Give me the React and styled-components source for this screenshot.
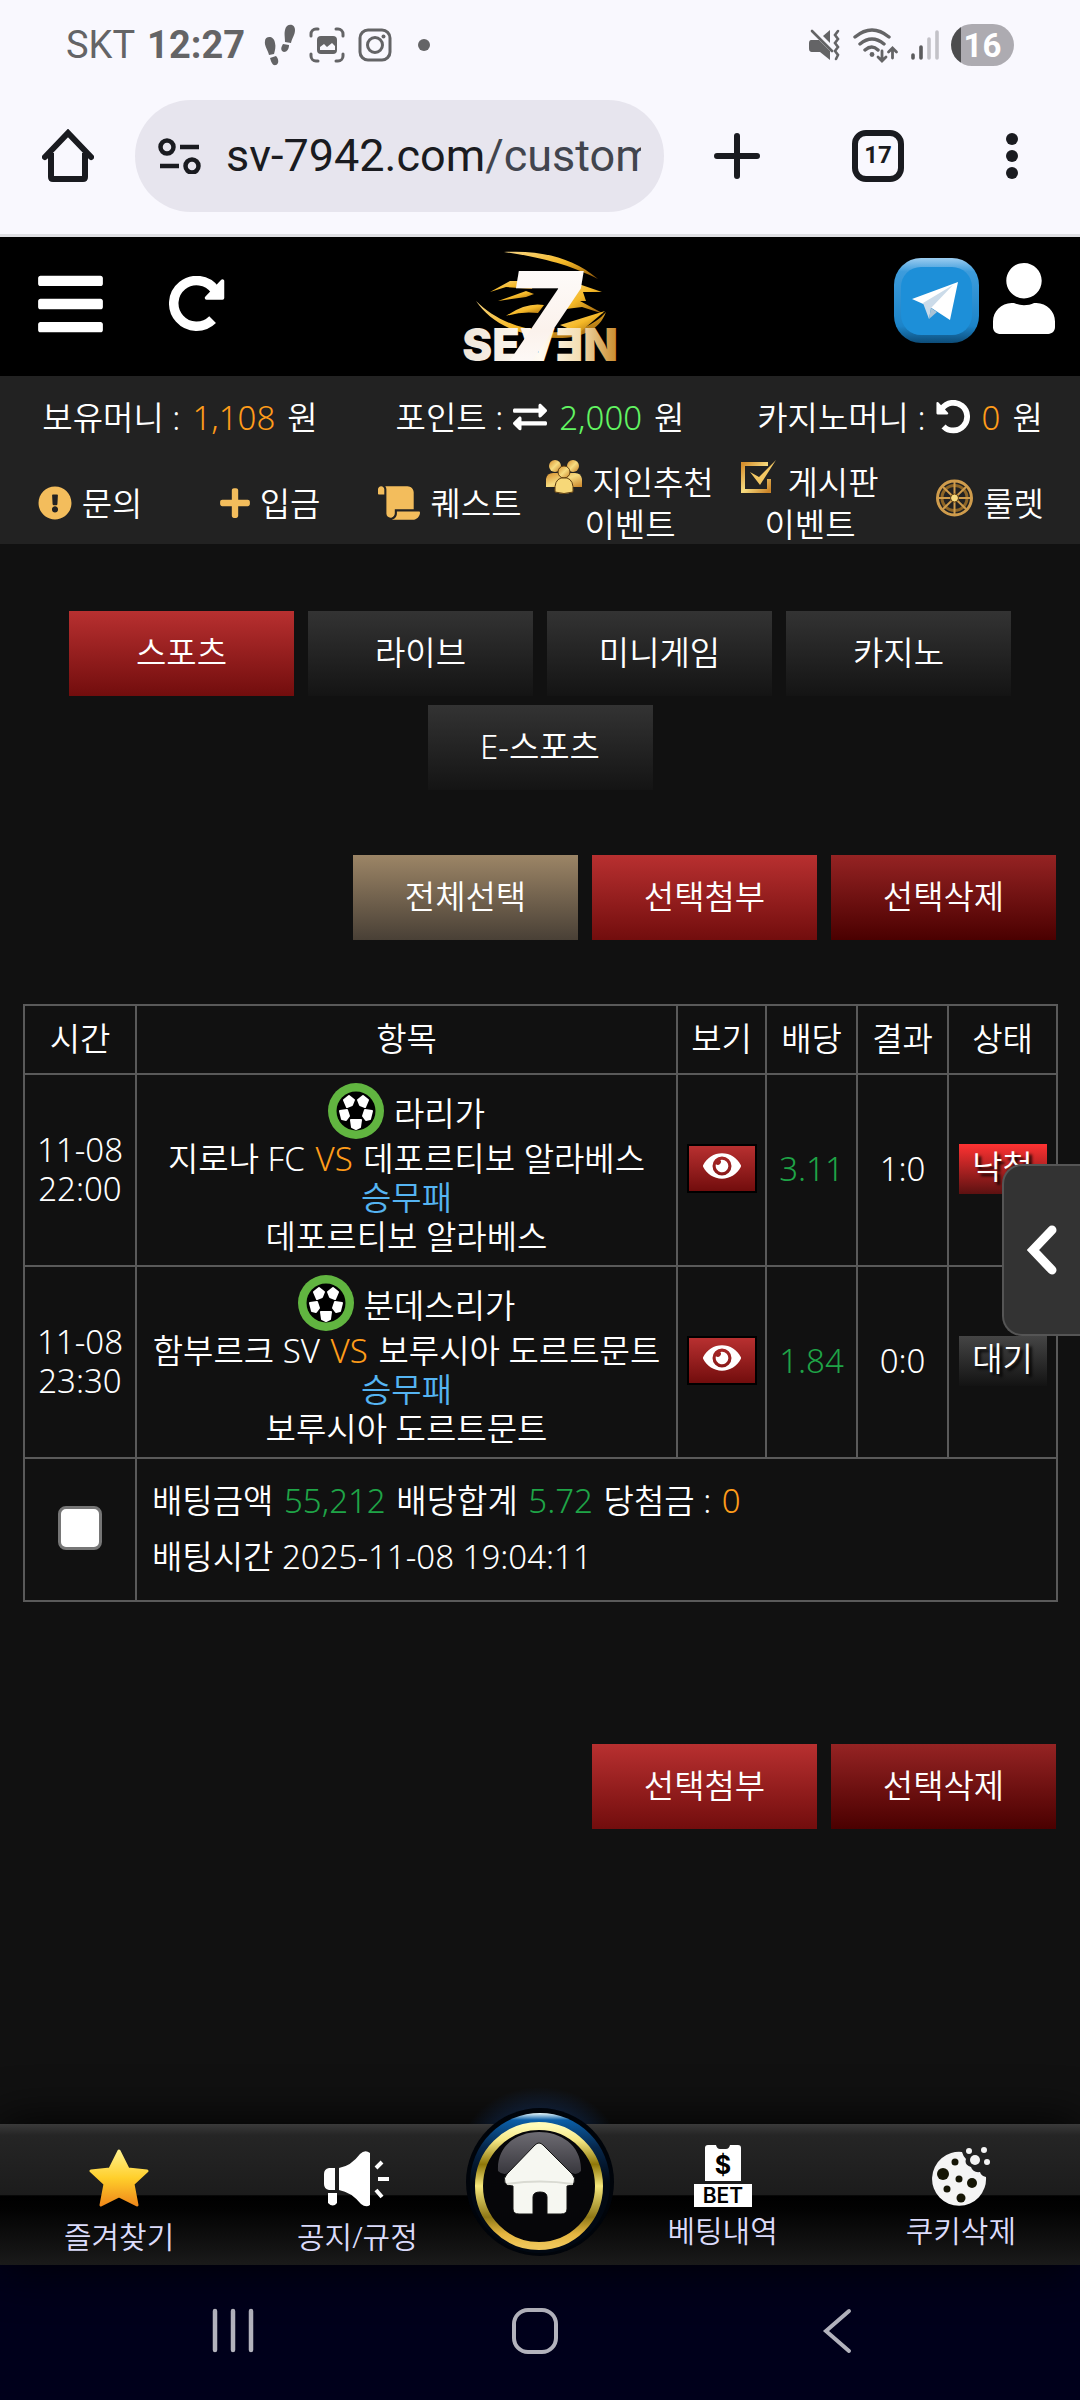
import React, { useState } from 'react'
import styled, { createGlobalStyle } from 'styled-components'
import {
  FaBars,
  FaUser,
  FaExclamationCircle,
  FaPlus,
  FaScroll,
  FaExchangeAlt,
  FaEye,
} from 'react-icons/fa'

const GlobalStyle = createGlobalStyle`
  * {
    box-sizing: border-box;
  }
  body {
    margin: 0;
    background: #111;
    color: #fff;
    font-family: 'Noto Sans', 'Noto Sans CJK KR', sans-serif;
    font-size: 33px;
    font-weight: 350;
    line-height: 39px;
  }
  button, input {
    margin: 0;
    padding: 0;
    border: 0;
    background: none;
    color: inherit;
    font: inherit;
  }
  a {
    color: inherit;
    text-decoration: none;
  }
  svg {
    display: block;
    flex: none;
  }
`
const Page = styled.div`
  display: flex;
  flex-direction: column;
  min-height: 100vh;
  overflow-x: hidden;
`

/* phone status bar + browser bar */

const StatusBar = styled.div`
  display: flex;
  align-items: center;
  justify-content: space-between;
  height: 90px;
  padding: 0 66px;
  background: #f9f8fe;
  color: #646466;
  font-family: Roboto, sans-serif;
  font-size: 38px;
  font-weight: 400;
`
const StatusGroup = styled.div`
  display: flex;
  align-items: center;
  gap: ${({ gap }) => gap}px;
`
const Battery = styled.span`
  width: 63px;
  height: 42px;
  border-radius: 21px;
  background: linear-gradient(90deg, #4c4c4e 10px, #adabb1 10px);
  color: #fff;
  font-size: 33px;
  font-weight: 700;
  line-height: 43px;
  text-align: center;
`
const BrowserBar = styled.div`
  display: flex;
  align-items: center;
  height: 147px;
  padding: 0 62px 13px 42px;
  background: #f9f8fe;
  border-bottom: 3px solid #dfdfe3;
  color: #1a1b20;
`
const AddressBar = styled.div`
  display: flex;
  flex: 1;
  align-items: center;
  gap: 24px;
  height: 112px;
  margin-left: 41px;
  padding: 0 23px;
  border-radius: 56px;
  background: #e7e5ee;
`
const Url = styled.span`
  flex: 1;
  width: 0;
  overflow: hidden;
  white-space: nowrap;
  font-family: Roboto, sans-serif;
  font-size: 45px;
  font-weight: 400;
  line-height: 60px;

  span {
    color: #42454e;
  }
`
const BrowserActions = styled.div`
  display: flex;
  align-items: center;
  justify-content: space-between;
  width: 304px;
  margin-left: 50px;
`
const TabCount = styled.button`
  width: 52px;
  height: 52px;
  border: 6px solid #1a1b20;
  border-radius: 14px;
  font-family: Roboto, sans-serif;
  font-size: 24px;
  font-weight: 700;
`
const MenuButton = styled.button`
  padding-left: 10px;
`

/* site header */

const Header = styled.header`
  display: grid;
  grid-template-columns: 1fr auto 1fr;
  align-items: center;
  height: 139px;
  padding: 0 25px;
  background: #000;
`
const HeaderLeft = styled.div`
  display: flex;
  align-items: center;
  gap: 66px;
  padding: 0 0 6px 13px;
`
const HeaderRight = styled.div`
  display: flex;
  align-items: flex-start;
  justify-content: flex-end;
  gap: 14px;
  padding-bottom: 12px;
`
const UserButton = styled.button`
  padding-top: 5px;
`
const BarsIcon = styled(FaBars)`
  width: 65px;
  height: 74px;
`
const UserIcon = styled(FaUser)`
  width: 62px;
  height: 71px;
`
const PlusIcon = styled(FaPlus)`
  width: 30px;
  height: 34px;
`
const ScrollIcon = styled(FaScroll)`
  width: 42px;
  height: 34px;
`
const EyeIcon = styled(FaEye)`
  width: 38px;
  height: 34px;
`
const Info = styled.section`
  background: #222;
`
const Balances = styled.div`
  display: grid;
  grid-template-columns: repeat(3, 1fr);
  height: 86px;
`
const Balance = styled.div`
  display: flex;
  align-items: center;
  justify-content: center;
  gap: 10px;
  padding-bottom: 4px;
  white-space: nowrap;
`
const Quick = styled.nav`
  display: grid;
  grid-template-columns: repeat(6, 1fr);
  height: 82px;
`
const QuickLink = styled.a`
  display: flex;
  flex-direction: column;
  align-items: center;
  justify-content: center;
  padding-bottom: 2px;
  line-height: 42px;
`
const QuickLine = styled.span`
  display: flex;
  align-items: center;
  gap: 10px;
  height: 42px;
  white-space: nowrap;

  svg {
    color: #f3bd5c;
    margin-bottom: ${({ raised }) => (raised ? 12 : 2)}px;
  }
`
const Amount = styled.span`
  margin: 0 2px;
  color: ${({ tone }) =>
    ({ orange: '#ff9c1a', lime: '#62f562', green: '#1fa447' })[tone]};
`

/* content */

const Main = styled.main`
  position: relative;
  flex: 1;
  padding: 67px 22px 0 23px;
`
const gradients = {
  dark: '#333, #141414',
  red: '#b83030, #720d0d',
  maroon: '#952323, #4a0000',
  tan: '#9c8566, #494036',
}
const Tabs = styled.nav`
  display: flex;
  flex-wrap: wrap;
  justify-content: center;
  gap: 9px 14px;
  padding-right: 1px;
`
const Button = styled.button`
  width: 225px;
  height: 85px;
  padding-bottom: 2px;
  background: linear-gradient(${({ tone }) => gradients[tone]});
`
const Actions = styled.div`
  display: flex;
  justify-content: flex-end;
  gap: 14px;
  margin-top: ${({ top }) => top}px;
  padding-right: 2px;
`
const Table = styled.table`
  width: 100%;
  margin-top: 64px;
  border-collapse: collapse;
  table-layout: fixed;
  text-align: center;

  th,
  td {
    padding: 0 0 3px;
    border: 2px solid #5a5a5a;
    font-weight: 350;
  }
  th {
    height: 69px;
  }
`
const League = styled.div`
  display: flex;
  align-items: flex-end;
  justify-content: center;
  gap: 10px;
  padding-top: 8px;
  line-height: 50px;
`
const Line = styled.div`
  line-height: 39px;
  white-space: nowrap;
  color: ${({ pick }) => (pick ? '#55b4f2' : '#fff')};

  &:last-child {
    padding-bottom: 6px;
  }
`
const ViewButton = styled.button`
  display: inline-flex;
  align-items: center;
  justify-content: center;
  width: 70px;
  height: 49px;
  padding-bottom: 6px;
  border: 2px solid #000;
  background: linear-gradient(#b83030, #720d0d);
  vertical-align: middle;
`
const State = styled.span`
  display: block;
  width: 88px;
  height: 50px;
  margin: 0 auto;
  line-height: 46px;
  text-shadow: 3px 3px 3px #000;
  background: linear-gradient(
    ${({ lost }) => (lost ? '#ff3232, #5c1111' : '#454545, #131313')}
  );
`
const Summary = styled.div`
  padding: 14px 15px 12px;
  line-height: 56px;
  text-align: left;
`
const Check = styled.input`
  display: block;
  width: 44px;
  height: 44px;
  margin: 0 auto;
  appearance: none;
  border: 3px solid #767676;
  border-radius: 8px;
  background: #fff;

  &:checked {
    background: #2a6fdb;
  }
`
const SlideTab = styled.button`
  position: absolute;
  top: 620px;
  right: 0;
  display: flex;
  align-items: center;
  justify-content: center;
  width: 78px;
  height: 172px;
  border: 2px solid #555;
  border-right: 0;
  border-radius: 20px 0 0 20px;
  background: #333;
`

/* bottom bars */

const BottomNav = styled.nav`
  position: relative;
  display: flex;
  height: 141px;
  background: linear-gradient(
    #3a3a3a,
    #252525 8%,
    #1c1c1c 50%,
    #000 51%,
    #020202 60%,
    #1a1a1a
  );
  box-shadow: 0 0 50px #000;
  color: #dcdcfb;
  font-size: 30px;
`
const NavItem = styled.a`
  display: flex;
  flex: 1;
  flex-direction: column;
  align-items: center;
  justify-content: flex-end;
  gap: ${({ tight }) => (tight ? 4 : 10)}px;
  padding-bottom: ${({ tight }) => (tight ? 14 : 8)}px;
  line-height: 40px;
`
const HomeItem = styled.a`
  display: flex;
  justify-content: center;
  width: 127px;

  svg {
    margin-top: -51px;
  }
`
const SystemNav = styled.div`
  display: grid;
  grid-template-columns: repeat(3, 1fr);
  align-items: center;
  justify-items: center;
  height: 135px;
  padding: 0 92px 3px 82px;
  background: #00001b;
`

const Footprints = () => (
  <svg width="32" height="42" viewBox="0 0 32 42" fill="currentColor">
    <path d="M1 17C1 12 10 11 11 19c1 4 0 7-1 11l-5 1C4 26 0 22 1 17z" />
    <path d="M6 34l6-2c3 3 3 8 0 9-4 1-5-4-6-7z" />
    <path d="M21 6c1-7 10-7 10 0 0 5-3 8-4 13l-6-1c0-5-1-8 0-12z" />
    <path d="M19 20l6 1c0 4-2 7-5 7-4-1-3-5-1-8z" />
  </svg>
)

const CaptureIcon = () => (
  <svg width="36" height="36" viewBox="0 0 36 36" fill="none" stroke="currentColor">
    <path
      d="M9 2H7a5 5 0 0 0-5 5v2M27 2h2a5 5 0 0 1 5 5v2M9 34H7a5 5 0 0 1-5-5v-2M27 34h2a5 5 0 0 0 5-5v-2"
      strokeWidth="3"
      strokeLinecap="round"
    />
    <rect x="8" y="9" width="20" height="18" rx="4" fill="currentColor" stroke="none" />
    <path d="M11 23v-3l4-3 3 3 5-4 3 3v4z" fill="#f9f8fe" stroke="none" />
  </svg>
)

const InstagramIcon = () => (
  <svg width="34" height="34" viewBox="0 0 34 34" fill="none" stroke="currentColor" strokeWidth="3">
    <rect x="2" y="2" width="30" height="30" rx="8" />
    <circle cx="17" cy="17" r="7.5" />
    <circle cx="25.500" cy="8.500" r="2" fill="currentColor" stroke="none" />
  </svg>
)

const MuteIcon = () => (
  <svg width="32" height="32" viewBox="0 0 32 32" fill="none" stroke="currentColor">
    <path d="M2 11h8l11 11v9L11 23H4c-4 0-4-2-4-5v-4c0-2 1-3 2-3z" fill="currentColor" stroke="none" />
    <path d="M14 7l7-6v13z" fill="currentColor" stroke="none" />
    <path d="M3 2l20 20M29 2l-3 4 3 4-3 4 3 4-3 4 3 4-2 4" strokeWidth="2.6" strokeLinecap="round" />
  </svg>
)

const WifiIcon = () => (
  <svg width="46" height="36" viewBox="0 0 46 36" fill="none" stroke="currentColor" strokeLinecap="round">
    <path d="M2 10q17-14 34 0M7 17q12-10 24 0M12 23q7-6 13 0" strokeWidth="3.400" />
    <circle cx="19" cy="27.500" r="2.400" fill="currentColor" stroke="none" />
    <path d="M29 24v9m-4-3l4 4 4-4M39.500 31v-9m-4 3l4-4 4 4" strokeWidth="2.800" />
  </svg>
)

const SignalIcon = () => (
  <svg width="28" height="32" viewBox="0 0 28 32" strokeWidth="3.600" strokeLinecap="round">
    <path d="M2 26v3M10 18v11" stroke="#5b5b5d" />
    <path d="M18 10v19M26 3v26" stroke="#c3c2c8" />
  </svg>
)

const BrowserHome = () => (
  <svg width="52" height="54" viewBox="0 0 52 54" fill="none" stroke="currentColor" strokeWidth="6">
    <path d="M3 28L26 4l23 24" strokeLinecap="round" />
    <path d="M9 24v24q0 2 2 2h30q2 0 2-2V24" />
  </svg>
)

const SiteSettings = () => (
  <svg width="44" height="36" viewBox="0 0 44 36" fill="none" stroke="currentColor" strokeWidth="4.500">
    <circle cx="9" cy="9" r="6.500" />
    <circle cx="34" cy="28" r="6.500" />
    <path d="M22 9h19M2 28h19" />
  </svg>
)

const RotateIcon = ({ size, flip }) => (
  <svg width={size} height={size} viewBox="0 0 56 56" fill="none" stroke="#fff">
    <g transform={flip ? 'translate(56 0) scale(-1 1)' : undefined}>
      <path d="M43.600 43.600A22.800 22.800 0 1 1 46 14" strokeWidth="9.500" />
      <path d="M53.500 5v17H37.500z" fill="#fff" strokeWidth="3.500" strokeLinejoin="round" />
    </g>
  </svg>
)

const Logo = () => (
  <svg width="156" height="116" viewBox="0 0 156 116" overflow="visible" role="img" aria-label="SEVEN">
    <defs>
      <linearGradient id="logoGold" x1="0" y1="0" x2="1" y2="1">
        <stop offset="0" stopColor="#f8d684" />
        <stop offset=".5" stopColor="#f5b928" />
        <stop offset="1" stopColor="#8f5507" />
      </linearGradient>
      <linearGradient id="logoWord" x1="0" y1="0" x2="1" y2="0">
        <stop offset="0" stopColor="#efe6da" />
        <stop offset=".5" stopColor="#fffaf2" />
        <stop offset=".75" stopColor="#f4dfb4" />
        <stop offset="1" stopColor="#c98a2a" />
      </linearGradient>
      <linearGradient id="logoSeven" x1="0" y1="0" x2="0" y2="1">
        <stop offset="0" stopColor="#fff" />
        <stop offset=".6" stopColor="#fbf2ec" />
        <stop offset="1" stopColor="#fff" />
      </linearGradient>
    </defs>
    <g fill="url(#logoGold)">
      <path d="M42 3c36-2 68 5 94 27C110 17 84 9 42 3z" />
      <path d="M28 43l20-11 24 0-2 8-26-2z" />
      <path d="M36 52l28-10 8 3-8 3z" />
      <path d="M14 52c16 16 38 27 70 31 26 2 46-4 60-20-8 22-32 29-64 25C48 84 26 70 14 52z" />
      <path d="M44 67q20-14 38-11l-6 8q-16-2-32 3z" />
      <path d="M108 32l32 11-19 0 3 9-6 0 24 13-22-7-24 3z" />
      <path d="M98 76l45-14-26 22z" />
    </g>
    <text
      x="78"
      y="112"
      textAnchor="middle"
      fontFamily="Inter, sans-serif"
      fontSize="45"
      fontWeight="900"
      fill="url(#logoWord)"
    >
      SEVƎN
    </text>
    <text
      x="80"
      y="112"
      textAnchor="middle"
      fontFamily="Inter, sans-serif"
      fontSize="124"
      fontWeight="800"
      fontStyle="italic"
      fill="url(#logoSeven)"
    >
      7
    </text>
  </svg>
)

const TelegramIcon = () => (
  <svg width="85" height="85" viewBox="0 0 85 85">
    <defs>
      <linearGradient id="tgEdge" x1="0" y1="0" x2="0" y2="1">
        <stop offset="0" stopColor="#9ccdf0" />
        <stop offset=".16" stopColor="#3d9cdc" />
        <stop offset=".8" stopColor="#1c84c9" />
        <stop offset="1" stopColor="#0d4c78" />
      </linearGradient>
    </defs>
    <rect width="85" height="85" rx="27" fill="url(#tgEdge)" />
    <rect x="7" y="9" width="71" height="68" rx="20" fill="#1d8fd8" />
    <path d="M18 41l46-17-8 38-20-13z" fill="#fff" />
    <path d="M29 45l30-18-22 23-2 11z" fill="#cbdbe9" />
    <path d="M35 61l2-11 6 4z" fill="#a9c3d6" />
  </svg>
)

const GoldFill = () => (
  <defs>
    <linearGradient id="gold" x1="0" y1="0" x2="1" y2="1">
      <stop offset="0" stopColor="#d68f2e" />
      <stop offset=".5" stopColor="#f7dc80" />
      <stop offset="1" stopColor="#c98328" />
    </linearGradient>
  </defs>
)

const PeopleIcon = () => (
  <svg width="36" height="34" viewBox="0 0 36 34" fill="url(#gold)">
    <GoldFill />
    <circle cx="9" cy="6" r="6" />
    <circle cx="27" cy="6" r="6" />
    <path d="M0 27V19q1-6 7-6h22q6 0 7 6v8z" />
    <circle cx="18" cy="12" r="6" stroke="#5e3d10" />
    <path d="M9 32q-1-12 6-14h6q7 2 6 14-9 3-18 0z" fill="#f7d878" stroke="#5e3d10" />
  </svg>
)

const GoldCheck = () => (
  <svg width="36" height="34" viewBox="0 0 36 34" fill="none">
    <path d="M28 19v12H2V4h25" stroke="url(#gold)" strokeWidth="4" />
    <path d="M9 12l9 5L35 0 19 25z" fill="#f3c763" />
  </svg>
)

const RouletteIcon = () => (
  <svg width="37" height="38" viewBox="0 0 37 38" fill="none" stroke="#cf9c4c">
    <circle cx="18.500" cy="19" r="17" strokeWidth="3" />
    <circle cx="18.500" cy="19" r="12.500" stroke="#8d6526" strokeWidth="3" />
    <path d="M18.500 3v32M3 19h31M7 8l23 22M30 8L7 30" strokeWidth="2" />
    <circle cx="18.500" cy="19" r="4" fill="#f7dc80" stroke="#5e3d10" />
  </svg>
)

const SoccerBall = () => (
  <svg width="56" height="56" viewBox="0 0 56 56">
    <circle cx="28" cy="28" r="28" fill="#61b540" />
    <circle cx="28" cy="28" r="19.500" fill="#000" />
    <g fill="#fff" stroke="#fff" strokeWidth="2" strokeLinejoin="round">
      <path d="M16 17l5-4 5 4-2 5-5 2z" />
      <path d="M40 17l-5-4-5 4 2 5 5 2z" />
      <path d="M12 28l7-1 2 6-3 4-4-1z" />
      <path d="M44 28l-7-1-2 6 3 4 4-1z" />
      <path d="M23 37h10l-1 7-4 2-4-2z" />
    </g>
  </svg>
)

const StarIcon = () => (
  <svg width="60" height="58" viewBox="0 0 60 58">
    <defs>
      <linearGradient id="star" x1="0" y1="0" x2="0" y2="1">
        <stop offset="0" stopColor="#fff08a" />
        <stop offset=".5" stopColor="#ffcf2b" />
        <stop offset="1" stopColor="#f08a1a" />
      </linearGradient>
    </defs>
    <path
      d="M30 2l9 18 19 2-14 13 4 21-18-9-18 9 4-21L2 22l19-2z"
      fill="url(#star)"
      stroke="url(#star)"
      strokeWidth="3"
      strokeLinejoin="round"
    />
  </svg>
)

const MegaphoneIcon = () => (
  <svg width="66" height="56" viewBox="0 0 66 56" fill="#fff">
    <path d="M5 17h6v22H5q-5-1-5-6V23q0-5 5-6zM4 42h9v10q-4 5-9 0z" />
    <path d="M15 17q12-2 21-14 5-5 10-1v52q-4 3-9-1-10-12-22-14z" />
    <path d="M52 17l6-6M54 28h11M52 39l6 7" stroke="#fff" strokeWidth="4" />
  </svg>
)

const BetIcon = () => (
  <svg width="58" height="64" viewBox="0 0 58 64" textAnchor="middle" fontFamily="Inter, sans-serif">
    <path d="M11 38V5q0-3 3-3h8q1 4 4 4h6q3 0 4-4h8q3 0 3 3v33z" fill="#fff" />
    <rect x="0" y="41" width="58" height="23" fill="#fff" />
    <text x="29" y="31" fontSize="25" fontWeight="700">$</text>
    <text x="29" y="60" fontSize="21" fontWeight="600">BET</text>
  </svg>
)

const CookieIcon = () => (
  <svg width="58" height="60" viewBox="0 0 58 60">
    <path
      d="M30 5A27 27 0 1 0 54 30q-5-1-6-5-7 1-9-5-7-2-5-8-3-3-4-7z"
      fill="#f4f4f4"
    />
    <g fill="#f4f4f4">
      <circle cx="43" cy="13" r="5" />
      <circle cx="37" cy="4" r="3" />
      <circle cx="52" cy="3" r="3" />
      <circle cx="55" cy="15" r="3" />
    </g>
    <g fill="#151505">
      <circle cx="11" cy="27" r="6" />
      <circle cx="23" cy="15" r="3.500" />
      <circle cx="40" cy="36" r="5" />
      <circle cx="27" cy="32" r="3.500" />
      <circle cx="15" cy="42" r="3.500" />
      <circle cx="29" cy="51" r="4.500" />
    </g>
  </svg>
)

const HomeBadge = () => (
  <svg width="250" height="190" viewBox="0 0 250 190">
    <defs>
      <linearGradient id="ring" x1="0" y1="0" x2="0" y2="1">
        <stop offset="0" stopColor="#fffbb8" />
        <stop offset=".12" stopColor="#f5e884" />
        <stop offset=".32" stopColor="#8f7708" />
        <stop offset=".5" stopColor="#f5e77c" />
        <stop offset=".76" stopColor="#8f7816" />
        <stop offset=".9" stopColor="#e5b640" />
        <stop offset="1" stopColor="#efc65a" />
      </linearGradient>
      <linearGradient id="rim" x1="0" y1="0" x2="0" y2="1">
        <stop offset="0" stopColor="#eafcff" />
        <stop offset=".05" stopColor="#0b5fa8" />
        <stop offset=".25" stopColor="#06264a" />
        <stop offset=".5" stopColor="#010812" />
      </linearGradient>
      <linearGradient id="shine" x1="0" y1="0" x2="0" y2="1">
        <stop offset="0" stopColor="#6d6b72" />
        <stop offset="1" stopColor="#38373d" />
      </linearGradient>
      <radialGradient id="glow">
        <stop offset=".4" stopColor="#12305f" stopOpacity=".8" />
        <stop offset="1" stopColor="#12305f" stopOpacity="0" />
      </radialGradient>
      <clipPath id="above">
        <rect width="250" height="51" />
      </clipPath>
    </defs>
    <ellipse cx="125" cy="80" rx="80" ry="66" fill="url(#glow)" clipPath="url(#above)" />
    <circle cx="125" cy="109" r="74" fill="#00040a" />
    <circle cx="125" cy="110" r="70" fill="url(#rim)" />
    <circle cx="124" cy="113" r="60" fill="#060609" stroke="url(#ring)" strokeWidth="8" />
    <path d="M83 98C80 46 168 46 166 98q-5 6-13 0L125 72 97 98q-8 6-14 0z" fill="url(#shine)" />
    <path
      d="M124 70q2 0 4 2l29 29q4 4 2 9-2 3-7 3v23q0 5-6 5h-14v-17q0-5-7-5t-7 5v17h-14q-6 0-6-5v-23q-6 0-8-3-2-5 2-9l28-29q2-2 4-2z"
      fill="#f6f7f1"
      stroke="#111"
    />
    <path d="M92 111q33-5 66 0" fill="none" stroke="#d9dad2" strokeWidth="2" />
  </svg>
)

const tabs = ['스포츠', '라이브', '미니게임', '카지노', 'E-스포츠']

const bets = [
  {
    date: '11-08',
    time: '22:00',
    league: '라리가',
    home: '지로나 FC',
    away: '데포르티보 알라베스',
    odds: '3.11',
    score: '1:0',
    state: '낙첨',
    lost: true,
  },
  {
    date: '11-08',
    time: '23:30',
    league: '분데스리가',
    home: '함부르크 SV',
    away: '보루시아 도르트문트',
    odds: '1.84',
    score: '0:0',
    state: '대기',
    lost: false,
  },
]

const BrowserChrome = () => (
  <>
    <StatusBar>
      <StatusGroup gap={19}>
        <StatusGroup gap={12}>
          <span>SKT</span>
          <b>12:27</b>
        </StatusGroup>
        <StatusGroup gap={13}>
          <Footprints />
          <CaptureIcon />
          <InstagramIcon />
          <svg width="36" height="12" viewBox="0 0 36 12" fill="currentColor">
            <circle cx="19" cy="6" r="6" />
          </svg>
        </StatusGroup>
      </StatusGroup>
      <StatusGroup gap={12}>
        <MuteIcon />
        <WifiIcon />
        <SignalIcon />
        <Battery>16</Battery>
      </StatusGroup>
    </StatusBar>
    <BrowserBar>
      <button aria-label="Home">
        <BrowserHome />
      </button>
      <AddressBar>
        <SiteSettings />
        <Url>
          sv-7942.com<span>/custom</span>
        </Url>
      </AddressBar>
      <BrowserActions>
        <button aria-label="New tab">
          <svg width="46" height="46" viewBox="0 0 46 46" stroke="currentColor" strokeWidth="6" strokeLinecap="round">
            <path d="M23 3v40M3 23h40" />
          </svg>
        </button>
        <TabCount>17</TabCount>
        <MenuButton aria-label="Menu">
          <svg width="12" height="46" viewBox="0 0 12 46" fill="currentColor">
            <circle cx="6" cy="6" r="6" />
            <circle cx="6" cy="23" r="6" />
            <circle cx="6" cy="40" r="6" />
          </svg>
        </MenuButton>
      </BrowserActions>
    </BrowserBar>
  </>
)

const SiteHeader = () => (
  <>
    <Header>
      <HeaderLeft>
        <button aria-label="메뉴">
          <BarsIcon />
        </button>
        <button aria-label="새로고침">
          <RotateIcon size={56} />
        </button>
      </HeaderLeft>
      <Logo />
      <HeaderRight>
        <a href="#telegram" aria-label="텔레그램">
          <TelegramIcon />
        </a>
        <UserButton aria-label="내 정보">
          <UserIcon />
        </UserButton>
      </HeaderRight>
    </Header>
    <Info>
      <Balances>
        <Balance>
          <span>보유머니 :</span>
          <Amount tone="orange">1,108</Amount>
          <span>원</span>
        </Balance>
        <Balance>
          <span>포인트 :</span>
          <FaExchangeAlt size={34} />
          <Amount tone="lime">2,000</Amount>
          <span>원</span>
        </Balance>
        <Balance>
          <span>카지노머니 :</span>
          <RotateIcon size={34} flip />
          <Amount tone="orange">0</Amount>
          <span>원</span>
        </Balance>
      </Balances>
      <Quick>
        <QuickLink href="#qna">
          <QuickLine>
            <FaExclamationCircle size={34} />
            문의
          </QuickLine>
        </QuickLink>
        <QuickLink href="#deposit">
          <QuickLine>
            <PlusIcon />
            입금
          </QuickLine>
        </QuickLink>
        <QuickLink href="#quest">
          <QuickLine>
            <ScrollIcon />
            퀘스트
          </QuickLine>
        </QuickLink>
        <QuickLink href="#friend">
          <QuickLine raised>
            <PeopleIcon />
            지인추천
          </QuickLine>
          <span>이벤트</span>
        </QuickLink>
        <QuickLink href="#board">
          <QuickLine raised>
            <GoldCheck />
            게시판
          </QuickLine>
          <span>이벤트</span>
        </QuickLink>
        <QuickLink href="#roulette">
          <QuickLine raised>
            <RouletteIcon />
            룰렛
          </QuickLine>
        </QuickLink>
      </Quick>
    </Info>
  </>
)

const BetTable = ({ checked, setChecked }) => (
  <Table>
    <colgroup>
      <col width="112" />
      <col />
      <col width="89" />
      <col width="91" />
      <col width="91" />
      <col width="109" />
    </colgroup>
    <thead>
      <tr>
        <th>시간</th>
        <th>항목</th>
        <th>보기</th>
        <th>배당</th>
        <th>결과</th>
        <th>상태</th>
      </tr>
    </thead>
    <tbody>
      {bets.map((bet) => (
        <tr key={bet.league}>
          <td>
            {bet.date}
            <br />
            {bet.time}
          </td>
          <td>
            <League>
              <SoccerBall />
              {bet.league}
            </League>
            <Line>
              {bet.home} <Amount tone="orange">VS</Amount> {bet.away}
            </Line>
            <Line pick>승무패</Line>
            <Line>{bet.away}</Line>
          </td>
          <td>
            <ViewButton aria-label="보기">
              <EyeIcon />
            </ViewButton>
          </td>
          <td>
            <Amount tone="green">{bet.odds}</Amount>
          </td>
          <td>{bet.score}</td>
          <td>
            <State lost={bet.lost}>{bet.state}</State>
          </td>
        </tr>
      ))}
      <tr>
        <td>
          <Check
            type="checkbox"
            aria-label="선택"
            checked={checked}
            onChange={(e) => setChecked(e.target.checked)}
          />
        </td>
        <td colSpan={5}>
          <Summary>
            배팅금액 <Amount tone="green">55,212</Amount> 배당합계{' '}
            <Amount tone="green">5.72</Amount> 당첨금 :{' '}
            <Amount tone="orange">0</Amount>
            <br />
            배팅시간 2025-11-08 19:04:11
          </Summary>
        </td>
      </tr>
    </tbody>
  </Table>
)

const Footer = () => (
  <>
    <BottomNav>
      <NavItem href="#favorite">
        <StarIcon />
        즐겨찾기
      </NavItem>
      <NavItem href="#notice">
        <MegaphoneIcon />
        공지/규정
      </NavItem>
      <HomeItem href="#home" aria-label="홈">
        <HomeBadge />
      </HomeItem>
      <NavItem href="#bets" tight>
        <BetIcon />
        베팅내역
      </NavItem>
      <NavItem href="#cookie" tight>
        <CookieIcon />
        쿠키삭제
      </NavItem>
    </BottomNav>
    <SystemNav>
      <button aria-label="Recents">
        <svg width="42" height="46" viewBox="0 0 42 46" stroke="#b3b3bd" strokeWidth="4.500" strokeLinecap="round">
          <path d="M3 3v39M21 3v39M39 3v39" />
        </svg>
      </button>
      <button aria-label="Home">
        <svg width="46" height="46" viewBox="0 0 46 46" fill="none" stroke="#b3b3bd" strokeWidth="4">
          <rect x="2" y="2" width="42" height="42" rx="14" />
        </svg>
      </button>
      <button aria-label="Back">
        <svg width="30" height="46" viewBox="0 0 30 46" fill="none" stroke="#b3b3bd" strokeWidth="4" strokeLinecap="round">
          <path d="M27 3L4 23l23 20" />
        </svg>
      </button>
    </SystemNav>
  </>
)

const App = () => {
  const [tab, setTab] = useState('스포츠')
  const [checked, setChecked] = useState(false)

  return (
    <Page>
      <GlobalStyle />
      <BrowserChrome />
      <SiteHeader />
      <Main>
        <Tabs>
          {tabs.map((name) => (
            <Button
              key={name}
              tone={name === tab ? 'red' : 'dark'}
              onClick={() => setTab(name)}
            >
              {name}
            </Button>
          ))}
        </Tabs>
        <Actions top={65}>
          <Button tone="tan" onClick={() => setChecked(true)}>
            전체선택
          </Button>
          <Button tone="red">선택첨부</Button>
          <Button tone="maroon">선택삭제</Button>
        </Actions>
        <BetTable checked={checked} setChecked={setChecked} />
        <Actions top={142}>
          <Button tone="red">선택첨부</Button>
          <Button tone="maroon">선택삭제</Button>
        </Actions>
        <SlideTab aria-label="열기">
          <svg width="30" height="50" viewBox="0 0 30 50" fill="none" stroke="#fff" strokeWidth="9" strokeLinecap="round">
            <path d="M25 5L6 25l19 20" />
          </svg>
        </SlideTab>
      </Main>
      <Footer />
    </Page>
  )
}

export default App
